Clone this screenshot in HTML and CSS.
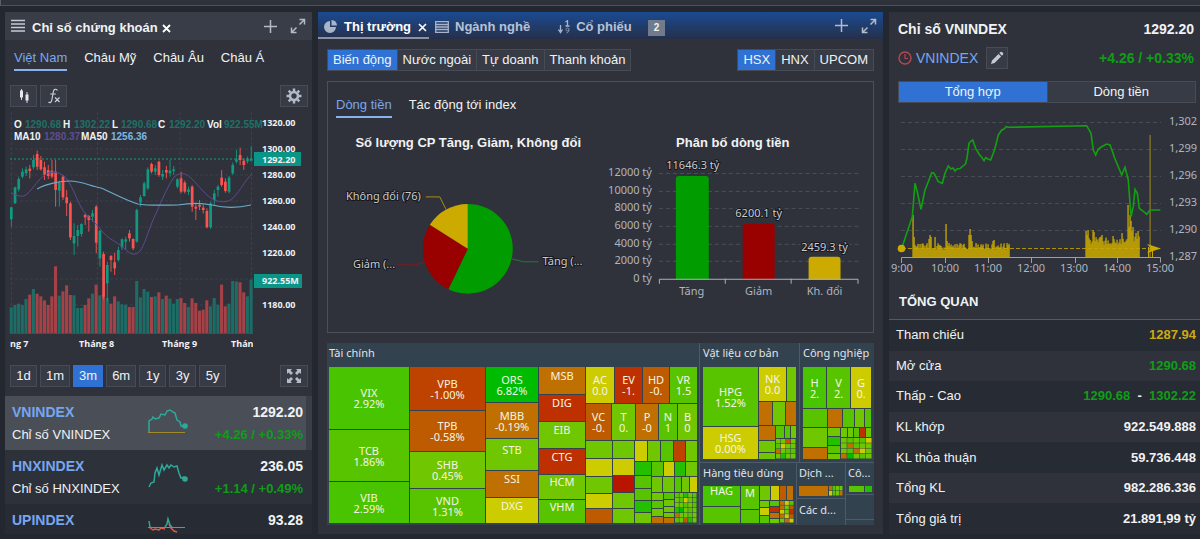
FILE: index.html
```html
<!DOCTYPE html>
<html lang="vi">
<head>
<meta charset="utf-8">
<meta name="viewport" content="width=device-width, initial-scale=1">
<title>Bảng chỉ số chứng khoán</title>
<link rel="stylesheet" href="styles.css">
</head>
<body>
<div class="topbar"></div>
<main class="board">

  <section class="panel">
    <header class="panel-head">
      <svg class="icon" width="14" height="14" viewBox="0 0 14 14"><path d="M0 1.500h14M0 5h14M0 8.500h14M0 12h14" stroke="#c6cbd4" stroke-width="1.400"/></svg>
      <h1 class="head-title">Chỉ số chứng khoán</h1>
      <button class="bare close" aria-label="Đóng"><svg width="9" height="9" viewBox="0 0 9 9"><path d="M1 1l7 7M8 1l-7 7" stroke="#fff" stroke-width="1.800"/></svg></button>
      <span class="spacer"></span>
      <button class="bare" aria-label="Thêm"><svg width="13" height="13" viewBox="0 0 13 13"><path d="M6.500 0v13M0 6.500h13" stroke="#b4bac6" stroke-width="1.500"/></svg></button>
      <button class="bare expand" aria-label="Mở rộng"><svg width="16" height="16" viewBox="0 0 16 16"><path d="M9.500 6.500L14 2M6.500 9.500L2 14M9.500 1.500H14.500V6.500M1.500 9.500v5H6.500" fill="none" stroke="#b4bac6" stroke-width="1.500"/></svg></button>
    </header>

    <nav class="tabs market-tabs">
      <button class="tab active">Việt Nam</button>
      <button class="tab">Châu Mỹ</button>
      <button class="tab">Châu Âu</button>
      <button class="tab">Châu Á</button>
    </nav>

    <div class="tools">
      <button class="tool" aria-label="Kiểu biểu đồ"><svg width="14" height="14" viewBox="0 0 14 14"><path d="M4.500 0v11M10 3v11" stroke="#d5d8de"/><path d="M3 1.500h3v7H3zM8.500 5.500h3v6h-3z" fill="#e6e8ec"/></svg></button>
      <button class="tool" aria-label="Chỉ báo"><svg width="14" height="16" viewBox="0 0 14 16"><path d="M10.500 2.500C9 .5 6.800 1 6.400 3.500L4.800 12C4.500 14.500 2.800 15.200 1.500 14M3.200 6h5.600M8 9.500l4.500 4.500M12.500 9.500L8 14" fill="none" stroke="#c9cdd5" stroke-width="1.200"/></svg></button>
      <span class="spacer"></span>
      <button class="tool" aria-label="Cài đặt"><svg width="16" height="16" viewBox="-8 -8 16 16"><circle r="4" fill="none" stroke="#b4bac6" stroke-width="2.600"/><path d="M0-5v-2.500M0 5v2.500M-5 0h-2.500M5 0h2.500M-3.600-3.600l-1.700-1.700M3.600 3.600l1.700 1.700M-3.600 3.600l-1.700 1.700M3.600-3.600l1.700-1.700" stroke="#b4bac6" stroke-width="2.500"/></svg></button>
    </div>

    <svg class="chart price-chart" viewBox="0 0 298 240" role="img" aria-label="Biểu đồ nến VNINDEX">
      <g class="grid-dark"><path d="M0 37h243M0 63h243M0 89h243M0 115h243M0 141h243M0 167h243M0 193h243M1.500 0v222M87.500 0v222M170 0v222M241.500 0v222"/></g>
      <path d="M0 47h243" stroke="#149a85" stroke-dasharray="2 2"/>
      <g id="volume"></g>
      <path d="M0 221.500h243" stroke="#3a6a68" stroke-width=".6"/>
      <g id="candles"></g>
      <path class="ma10" d="M1 81C8 84 13 86 17 82C24 76 28 67 36 62C44 58 52 61 57 67C64 78 66 86 71 95C78 107 84 108 91 118C99 128 106 129 114 136C120 143 126 144 130 139C135 132 136 125 143 108C150 93 155 79 164 65C171 59 177 62 181 66C190 75 196 84 204 88C212 91 219 90 223 86C231 78 235 68 242 62"/>
      <path class="ma50" d="M27 77C36 72 50 69 60 69C71 69 80 74 91 76C103 81 117 89 128 92C139 94 156 93 168 93C180 91 192 91 202 93C214 96 228 96 241 93"/>
      <text class="legend" y="16"><tspan x="4">O</tspan><tspan class="teal" x="15">1290.68</tspan><tspan x="53">H</tspan><tspan class="teal" x="64">1302.22</tspan><tspan x="102">L</tspan><tspan class="teal" x="111">1290.68</tspan><tspan x="148">C</tspan><tspan class="teal" x="159">1292.20</tspan><tspan x="197">Vol</tspan><tspan class="teal" x="214">922.55M</tspan></text>
      <text class="legend" y="28"><tspan x="4">MA10</tspan><tspan class="violet" x="34">1280.37</tspan><tspan x="71">MA50</tspan><tspan class="sky" x="101">1256.36</tspan></text>
      <path d="M244 40h47v14h-47zM244 162h48v14h-48z" fill="#0b9586"/>
      <g class="axis-bold">
        <text x="252" y="14">1320.00</text><text x="252" y="40">1300.00</text><text x="252" y="51">1292.20</text><text x="252" y="66">1280.00</text><text x="252" y="92">1260.00</text><text x="252" y="118">1240.00</text><text x="252" y="144">1220.00</text><text x="252" y="172">922.55M</text><text x="252" y="196">1180.00</text>
      </g>
      <svg x="0" y="222" width="243" height="18" class="axis-bold">
        <text x="0" y="13">ng 7</text><text x="69" y="13">Tháng 8</text><text x="152" y="13">Tháng 9</text><text x="221" y="13">Tháng</text>
      </svg>
    </svg>

    <div class="tools ranges">
      <button class="tool">1d</button><button class="tool">1m</button><button class="tool active">3m</button><button class="tool">6m</button><button class="tool">1y</button><button class="tool">3y</button><button class="tool">5y</button>
      <span class="spacer"></span>
      <button class="tool" aria-label="Toàn màn hình"><svg width="16" height="16" viewBox="0 0 16 16"><path d="M1 1h5L4.500 2.500 7 5 5 7 2.500 4.500 1 6zM15 1v5l-1.500-1.500L11 7 9 5l2.500-2.500L10 1zM1 15v-5l1.500 1.500L5 9l2 2-2.500 2.500L6 15zM15 15h-5l1.500-1.500L9 11l2-2 2.500 2.500L15 10z" fill="#b4bac6"/></svg></button>
    </div>

    <ul class="index-list">
      <li class="index-row selected">
        <div class="index-name"><a class="ticker" href="#vnindex">VNINDEX</a><span>Chỉ số VNINDEX</span></div>
        <svg class="spark" width="42" height="30" viewBox="0 0 42 30"><path d="M2 24V13l3-2 1-2 2 2 4-1 2-4 4 1 2-4 3-1 3 2 2 1 2 7 3 2 1 4 4 1" fill="none" stroke="#2fa89a" stroke-width="1.500"/><path d="M1 24.500h37" stroke="#a08a2a"/><circle cx="38" cy="18" r="2.800" fill="#2fa89a"/></svg>
        <div class="index-value"><b>1292.20</b><b class="up">+4.26 / +0.33%</b></div>
      </li>
      <li class="index-row">
        <div class="index-name"><a class="ticker" href="#hnxindex">HNXINDEX</a><span>Chỉ số HNXINDEX</span></div>
        <svg class="spark" width="42" height="30" viewBox="0 0 42 30"><path d="M2 25l2-4 3-1 1-9 2-5 2 7 3-10 2 5 3-5 2 3 2-3 3 2 3-1 2 7 2 5 3-1 3 2" fill="none" stroke="#2fa89a" stroke-width="1.500"/><circle cx="38" cy="17" r="2.800" fill="#2fa89a"/></svg>
        <div class="index-value"><b>236.05</b><b class="up">+1.14 / +0.49%</b></div>
      </li>
      <li class="index-row">
        <div class="index-name"><a class="ticker" href="#upindex">UPINDEX</a></div>
        <svg class="spark" width="42" height="30" viewBox="0 0 42 30"><path d="M3 12l3 2 2-1 4 1 2-2 4 1M22 8l2 4 3 3 3 1" fill="none" stroke="#e2594a" stroke-width="1.500"/><path d="M2 5l1 6M18 11l2-3 1-5 2 6 2 2" fill="none" stroke="#2fa89a" stroke-width="1.500"/><path d="M1 11.500h37" stroke="#a08a2a"/></svg>
        <div class="index-value"><b>93.28</b></div>
      </li>
    </ul>
  </section>

  <section class="panel">
    <header class="panel-head blue">
      <button class="head-tab current">
        <svg width="13" height="13" viewBox="0 0 13 13"><path d="M6 1v6h6A6 6 0 1 1 6 1z" fill="#aab4c8"/><path d="M7.500 0A6 6 0 0 1 13 5.500H7.500z" fill="#aab4c8"/></svg>
        Thị trường
        <svg class="tab-close" width="9" height="9" viewBox="0 0 9 9"><path d="M1 1l7 7M8 1l-7 7" stroke="#fff" stroke-width="1.600"/></svg>
      </button>
      <button class="head-tab">
        <svg width="14" height="12" viewBox="0 0 14 12"><path d="M.7.7h12.600v10.600H.7zM1 3.500h12M1 6h12M1 8.500h12" fill="none" stroke="#aab4c8" stroke-width="1.300"/></svg>
        Ngành nghề
      </button>
      <button class="head-tab sort-tab">
        <svg width="12" height="14" viewBox="0 0 12 14"><path d="M2.500 5v7M.5 9.500l2 3 2-3M7.500 2L9.500.8V6M7.500 6h4" fill="none" stroke="#aab4c8" stroke-width="1.300"/><circle cx="9.500" cy="9.500" r="1.500" fill="none" stroke="#8791a6"/><path d="M11 9.500q0 3-2.500 3.500" fill="none" stroke="#8791a6"/></svg>
        Cổ phiếu
      </button>
      <span class="count">2</span>
      <span class="spacer"></span>
      <button class="bare" aria-label="Thêm"><svg width="13" height="13" viewBox="0 0 13 13"><path d="M6.500 0v13M0 6.500h13" stroke="#b4bac6" stroke-width="1.500"/></svg></button>
      <button class="bare expand" aria-label="Mở rộng"><svg width="16" height="16" viewBox="0 0 16 16"><path d="M9.500 6.500L14 2M6.500 9.500L2 14M9.500 1.500H14.500V6.500M1.500 9.500v5H6.500" fill="none" stroke="#b4bac6" stroke-width="1.500"/></svg></button>
    </header>

    <div class="filters">
      <div class="segment"><button class="seg active">Biến động</button><button class="seg">Nước ngoài</button><button class="seg">Tự doanh</button><button class="seg">Thanh khoản</button></div>
      <div class="segment"><button class="seg active">HSX</button><button class="seg">HNX</button><button class="seg">UPCOM</button></div>
    </div>

    <div class="card">
      <nav class="tabs">
        <button class="tab active">Dòng tiền</button>
        <button class="tab">Tác động tới index</button>
      </nav>
      <div class="figures">
        <figure class="figure">
          <figcaption>Số lượng CP Tăng, Giảm, Không đổi</figcaption>
          <svg class="chart" viewBox="0 0 265 176" role="img" aria-label="Tỷ lệ cổ phiếu tăng, giảm, không đổi">
            <path d="M132 93V48A45 45 0 1 1 112.500 133.500z" fill="#009c00"/>
            <path d="M132 93L112.500 133.500A45 45 0 0 1 94 69z" fill="#990000"/>
            <path d="M132 93L94 69A45 45 0 0 1 132 48z" fill="#ccaa00"/>
            <path d="M90 41h14l6 12" fill="none" stroke="#a88e18"/>
            <path d="M62 109h18l10-3" fill="none" stroke="#7d1a20"/>
            <path d="M176 103l12 3h15" fill="none" stroke="#1c7c2c"/>
            <g class="outlined"><text x="10" y="44">Không đổi (76)</text><text x="17" y="112">Giảm (...</text><text x="207" y="109">Tăng (...</text></g>
          </svg>
        </figure>
        <figure class="figure">
          <figcaption>Phân bố dòng tiền</figcaption>
          <svg class="chart" viewBox="0 0 265 176" role="img" aria-label="Phân bố dòng tiền theo nhóm">
            <path d="M58 17.500h200M58 35.500h200M58 52.500h200M58 70.500h200M58 88.500h200M58 105.500h200" stroke="#4b4f58" stroke-dasharray="4 3"/>
            <path d="M75 124V23q0-3 3-3h27q3 0 3 3v101z" fill="#009c00"/>
            <path d="M142 124V71q0-3 3-3h26q3 0 3 3v53z" fill="#990000"/>
            <path d="M208 124v-20q0-3 3-3h26q3 0 3 3v20z" fill="#ccaa00"/>
            <path d="M58.500 128v-4.500h199v4.500M124.500 123v5M190.500 123v5" fill="none" stroke="#aeb2bb"/>
            <g class="axis end"><text x="51" y="20">12000 tỷ</text><text x="51" y="38">10000 tỷ</text><text x="51" y="55">8000 tỷ</text><text x="51" y="73">6000 tỷ</text><text x="51" y="91">4000 tỷ</text><text x="51" y="108">2000 tỷ</text><text x="51" y="126">0 tỷ</text></g>
            <g class="axis mid"><text x="91" y="139">Tăng</text><text x="158" y="139">Giảm</text><text x="224" y="139">Kh. đổi</text></g>
            <g class="outlined mid"><text x="92" y="13">11646.3 tỷ</text><text x="158" y="61">6200.1 tỷ</text><text x="224" y="95">2459.3 tỷ</text></g>
          </svg>
        </figure>
      </div>
    </div>

    <svg class="chart treemap" id="treemap" viewBox="0 0 547 182" role="img" aria-label="Bản đồ nhiệt theo ngành"></svg>
  </section>

  <section class="panel detail">
    <div class="quote">
      <h2 class="quote-title">Chỉ số VNINDEX</h2>
      <b class="quote-price">1292.20</b>
      <div class="quote-link">
        <svg width="14" height="14" viewBox="0 0 14 14"><circle cx="7" cy="7" r="6" fill="none" stroke="#b8474f" stroke-width="1.400"/><path d="M7 3v4.500h3" fill="none" stroke="#b8474f" stroke-width="1.200"/></svg>
        <a href="#vnindex">VNINDEX</a>
        <button class="tool edit" aria-label="Sửa"><svg width="14" height="14" viewBox="0 0 14 14"><path d="M1 13l1-3.600 6.500-6.500 2.600 2.600L4.600 12zM9.300 2.100l1.300-1.200q.7-.5 1.400.1l1 1q.6.7.1 1.400l-1.200 1.300z" fill="#c4c9d2"/></svg></button>
      </div>
      <b class="quote-change up">+4.26 / +0.33%</b>
    </div>
    <div class="segment wide"><button class="seg active">Tổng hợp</button><button class="seg">Dòng tiền</button></div>

    <svg class="chart" viewBox="0 0 311 172" role="img" aria-label="Diễn biến VNINDEX trong phiên">
      <path d="M12 16.500h260M12 43.500h260M12 70.500h260M12 97.500h260M12 124.500h260" stroke="#484c55" stroke-dasharray="4 3"/>
      <g id="intraday-volume"></g>
      <path d="M13 142.500h255" stroke="#ccaa00" stroke-dasharray="4 2" stroke-width=".8"/>
      <path d="M12.500 157v-5.500h259v5M56.500 152v5M99.500 152v5M142.500 152v5M186.500 152v5M228.500 152v5" fill="none" stroke="#9b9fa8"/>
      <path d="M12.700 142.300L23.300 110.700 26 77.300 28.300 86 32 103.300 36 84 39.300 75.700 42.700 66.700 45 67.300 49.300 75.700 53.300 77.300 56 67.300 59.300 60 62 63 64 62 66 65 68 63 71 62.500 74 60 76.500 58 78 52 80 37.300 82 35 83.700 34 86.700 42.300 90 48 92.700 51.300 95 54.700 96.700 51.700 99 53 101.700 54 104 48 106 42.300 109.300 29 112.700 24 115 23 117.300 20.500 119 21.300 197.700 19.700 202 27.300 204.300 44 206.700 49 209.300 43 213 40.500 217.700 38 221 39 224 47 225.300 51.300 229.300 60.700 232.700 69 236 61.300 239.300 74 241 97.300 242 110.700 244.300 100.700 246 83.300 248.300 87.300 250.300 102.300 254 105 257.700 108.300 261 104H271.300" fill="none" stroke="#12a012" stroke-width="1.600"/>
      <circle cx="12.500" cy="142.500" r="3.800" fill="#ccaa00"/>
      <path d="M258 138l14 4.500-14 4.500 4-4.500z" fill="#ccaa00"/>
      <g class="axis"><text x="280" y="19">1,302</text><text x="280" y="46">1,299</text><text x="280" y="73">1,296</text><text x="280" y="100">1,293</text><text x="280" y="127">1,290</text><text x="280" y="154">1,287</text></g>
      <g class="axis mid"><text x="13" y="166">9:00</text><text x="56" y="166">10:00</text><text x="99" y="166">11:00</text><text x="142" y="166">12:00</text><text x="185" y="166">13:00</text><text x="228" y="166">14:00</text><text x="271" y="166">15:00</text></g>
    </svg>

    <h3 class="overview-title">TỔNG QUAN</h3>
    <div class="overview-body">
      <table class="overview">
        <tbody>
          <tr><th scope="row">Tham chiếu</th><td class="ref">1287.94</td></tr>
          <tr><th scope="row">Mở cửa</th><td class="up">1290.68</td></tr>
          <tr><th scope="row">Thấp - Cao</th><td><span class="up">1290.68</span> &nbsp;-&nbsp; <span class="up">1302.22</span></td></tr>
          <tr><th scope="row">KL khớp</th><td>922.549.888</td></tr>
          <tr><th scope="row">KL thỏa thuận</th><td>59.736.448</td></tr>
          <tr><th scope="row">Tổng KL</th><td>982.286.336</td></tr>
          <tr><th scope="row">Tổng giá trị</th><td>21.891,99 tỷ</td></tr>
        </tbody>
      </table>
    </div>
  </section>
</main>
<script src="charts.js"></script>
</body>
</html>
```

FILE: styles.css
```css
* { box-sizing: border-box; }

body {
  margin: 0;
  height: 100vh;
  display: flex;
  flex-direction: column;
  overflow: hidden;
  background: #232730;
  color: #f1f2f4;
  font: 13px/16px "Liberation Sans", Arial, sans-serif;
}

h1, h2, h3, ul, figure { margin: 0; padding: 0; }
button { font: inherit; color: inherit; margin: 0; padding: 0; border: 0; background: none; cursor: pointer; }
a { color: #77a6f0; text-decoration: none; }
svg { display: block; flex: none; }

.topbar { height: 6px; flex: none; background: #2e323b; border-bottom: 1px solid #4d515a; border-left: 1px solid #5a5e66; }

.board {
  flex: 1;
  min-height: 0;
  display: grid;
  grid-template-columns: 307fr 565fr 311fr;
  gap: 6px;
  padding: 6px 0 5px 5px;
}

.panel { display: flex; flex-direction: column; min-width: 0; min-height: 0; overflow: hidden; background: #2f323b; }
.spacer { flex: 1; }
.up { color: #0f9d17; }
.ref { color: #ccaa11; }

.panel-head { display: flex; align-items: center; flex: none; height: 28px; padding: 0 6px; background: #383d47; }
.icon { margin-right: 7px; }
.head-title { font-size: 13px; font-weight: bold; padding-top: 3px; }
.close { margin: 4px 0 0 4px; }
.expand { margin-left: 13px; }

.panel-head.blue { height: 27px; padding: 0 6px 0 0; background: linear-gradient(#1b4a92, #25304a); }
.head-tab { display: flex; align-items: center; align-self: stretch; gap: 6px; padding: 4px 2px 0 6px; font-weight: bold; color: #b9c2d3; border-bottom: 2px solid transparent; }
.head-tab.current { gap: 7px; color: #fff; border-bottom-color: #8a93a5; }
.tab-close { margin-top: 2px; }
.sort-tab { margin-left: 20px; }
.count { margin: 5px 0 0 14px; padding: 0 6px; font-size: 10px; font-weight: bold; background: #727b8c; }

.tabs { display: flex; gap: 17px; }
.market-tabs { padding: 10px 9px 0; }
.tab { padding-bottom: 3px; border-bottom: 2px solid transparent; }
.tab.active { color: #7aa7ee; border-bottom-color: #8ab2f2; }

.tools { display: flex; gap: 3px; padding: 14px 4px 5px 5px; }
.tool { display: flex; align-items: center; justify-content: center; height: 22px; min-width: 27px; padding: 0 5px; background: #363b45; border: 1px solid #464b55; }
.tool.active { background: #2f72d4; border-color: #2f72d4; }
.ranges { padding: 13px 4px 9px 5px; }

.chart { width: 100%; height: auto; overflow: visible; }
.price-chart { width: auto; margin: 0 4px 0 5px; }
.grid-dark { fill: none; stroke: #3b3f48; stroke-dasharray: 3 2; }
.ma10 { fill: none; stroke: #5d4a8c; }
.ma50 { fill: none; stroke: #6fa8c8; stroke-width: 1.2px; }
.legend { font: bold 10px "Liberation Sans", Arial, sans-serif; fill: #f1f2f4; }
.legend .teal { fill: #1d7168; }
.legend .violet { fill: #5f4d90; }
.legend .sky { fill: #79b8e2; }
.axis-bold { font: bold 9px "Open Sans", sans-serif; fill: #f1f2f4; }
.axis { font: 11px "Noto Sans", sans-serif; fill: #b1b5bf; }
.outlined { font: 11px "Noto Sans", sans-serif; fill: #c9ccd2; stroke: #16181d; stroke-width: 2px; paint-order: stroke; }
.mid { text-anchor: middle; }
.end { text-anchor: end; }

.index-list { flex: 1; min-height: 0; overflow: hidden; list-style: none; }
.index-row { display: flex; align-items: flex-start; height: 54px; padding: 8px 9px 0 7px; background: #2d313a; }
.index-row:nth-child(3) { background: #272b33; }
.index-row.selected { background: #4a4f57; border-right: 6px solid #3a3e47; padding-right: 3px; }
.index-name { flex: 1; display: flex; flex-direction: column; gap: 7px; }
.ticker { font-size: 14px; font-weight: bold; }
.spark { margin: 4px 6px 0 0; }
.index-value { width: 108px; display: flex; flex-direction: column; gap: 7px; text-align: right; }
.index-value b:first-child { font-size: 14px; }

.filters { display: flex; justify-content: space-between; padding: 10px 9px 10px; }
.segment { display: flex; border: 1px solid #464b55; background: #363b45; }
.seg { height: 20px; padding: 0 5px; border-left: 1px solid #464b55; }
.seg:first-child { border-left: 0; }
.seg.active { background: #2f72d4; }

.card { margin: 0 9px; padding: 15px 8px 0; border: 1px solid #4b4f58; }
.figures { display: flex; padding-top: 17px; }
.figure { flex: 1; min-width: 0; }
.figure figcaption { font-weight: bold; text-align: center; }
.figure .chart { margin-top: 5px; }

.treemap { width: auto; margin: 10px 9px 0; background: #33424f; }
.treemap .sector { font: 11px "Noto Sans", sans-serif; fill: #e1e4e8; }
.treemap .cell { font: 11px "Noto Sans", sans-serif; fill: #f5f5e6; text-anchor: middle; }

.quote { display: grid; grid-template-columns: 1fr auto; align-items: center; row-gap: 10px; padding: 9px 6px 12px 9px; }
.quote-title, .quote-price, .quote-change { font-size: 14px; font-weight: bold; }
.quote-price, .quote-change { text-align: right; }
.quote-link { display: flex; align-items: center; gap: 4px; font-size: 14px; }
.edit { width: 22px; min-width: 22px; margin-left: 4px; padding: 0; }
.segment.wide { margin: 0 4px 3px 9px; }
.wide .seg { flex: 1; }

.overview-title { padding: 16px 10px 9px; font-size: 13px; border-bottom: 1px solid #555960; }
.overview-body { flex: 1; min-height: 0; }
.overview { width: 100%; height: 100%; border-collapse: collapse; }
.overview tr:nth-child(odd) { background: #272b33; }
.overview th { padding: 0 7px; font-weight: normal; text-align: left; }
.overview td { padding: 0 4px; font-weight: bold; text-align: right; }
```

FILE: charts.js
```js
const NS = "http://www.w3.org/2000/svg";

function add(parent, tag, attrs, text) {
  const node = document.createElementNS(NS, tag);
  for (const key in attrs) node.setAttribute(key, attrs[key]);
  if (text) node.textContent = text;
  parent.appendChild(node);
  return node;
}

function rect(parent, x, y, width, height, fill) {
  return add(parent, "rect", { x, y, width, height, fill });
}

/* Daily candles: direction, body top, body bottom, wick top, wick bottom (in thirds of a unit). */
const candles = `G 292 328 290 350|G 232 280 230 282|G 207 238 200 245|G 185 200 175 205|G 178 190 170 198|R 176 183 165 205|G 150 172 135 178|R 132 170 122 180|R 150 178 138 182|R 172 195 155 210|R 180 198 165 207|R 182 200 150 205|R 185 240 150 290|G 218 242 212 290|R 200 262 195 270|R 262 280 240 318|R 280 382 275 390|G 378 400 340 435|G 360 378 345 410|G 342 372 340 380|R 315 322 310 345|R 318 330 315 365|G 310 320 300 335|R 290 398 285 430|G 362 445 360 470|R 432 560 425 568|G 465 520 455 575|R 438 450 435 485|R 457 475 428 495|G 420 450 410 455|G 388 412 385 420|G 388 395 380 420|R 370 385 360 395|R 387 415 385 420|G 300 395 296 398|G 262 278 255 290|G 220 258 215 260|G 178 235 172 240|R 162 185 158 190|G 175 185 165 195|R 155 195 152 200|G 192 200 180 210|R 180 188 168 205|G 182 190 150 200|G 178 183 168 195|G 208 230 205 235|R 205 245 185 250|R 218 245 212 250|G 238 246 230 255|R 230 290 225 305|R 290 296 280 330|R 285 290 270 300|R 293 300 285 310|R 303 352 295 355|G 280 352 275 357|G 250 270 240 285|G 230 240 225 260|R 203 225 180 230|R 215 243 205 248|G 203 245 198 250|G 165 190 158 195|G 148 155 120 160|R 135 150 113 165|R 152 165 145 180|G 146 154 140 160|G 146 152 108 155`.split("|");
const volumes = [77, 84, 88, 84, 102, 115, 132, 118, 110, 98, 84, 110, 200, 112, 125, 143, 114, 113, 75, 75, 84, 104, 118, 145, 113, 115, 105, 88, 110, 95, 86, 85, 78, 78, 156, 107, 132, 124, 108, 110, 122, 102, 112, 103, 88, 102, 105, 90, 78, 104, 90, 67, 70, 98, 80, 105, 85, 145, 80, 88, 156, 155, 152, 122, 110, 160];

const candleLayer = document.getElementById("candles");
const volumeLayer = document.getElementById("volume");
candles.forEach((row, i) => {
  const [dir, ...values] = row.split(" ");
  const [top, bottom, high, low] = values.map(v => v / 3 - 2);
  const x = 1.3 + i * 3.69;
  const color = dir === "G" ? "#109a82" : "#fb5350";
  rect(candleLayer, x - 0.4, high, 0.9, low - high, color);
  rect(candleLayer, x - 1.3, top, 2.7, bottom - top, color);
  rect(volumeLayer, x - 1.6, 221 - volumes[i] / 3, 3.1, volumes[i] / 3, dir === "G" ? "#1d6c65" : "#a44247");
});

/* Traded volume per minute. */
const intraday = document.getElementById("intraday-volume");
const noise = i => (Math.sin(i * 12.9) * 43758.5 % 1 + 1) % 1;
const peaks = { 24: 42, 25: 20, 40: 18, 41: 22, 42: 20, 46: 20, 57: 33, 58: 16, 80: 22, 81: 28, 82: 22, 83: 16, 104: 16, 105: 17, 197: 26, 198: 22, 199: 27, 204: 27, 205: 25, 213: 22, 224: 21, 233: 24, 239: 52, 240: 30, 241: 42, 242: 36, 243: 26, 244: 30, 247: 24, 249: 26 };
for (let x = 24; x <= 250; x++) {
  if (x > 120 && x < 197) continue;
  const base = x < 121 ? 7 + noise(x) * 7 : 12 + noise(x) * 9;
  const h = peaks[x] || base;
  rect(intraday, x - 0.6, 151 - h, 1.3, h, "#c9a800");
}
rect(intraday, 260.5, 29, 1.2, 122, "#8f7c22");
rect(intraday, 259, 141, 1, 10, "#c9a800");
rect(intraday, 263, 144, 1, 7, "#c9a800");

/* Sector heat map. */
const map = document.getElementById("treemap");
const tone = { a: "#48c400", b: "#58c400", c: "#70c600", d: "#24c000", e: "#00bc00", y: "#cccc00", o: "#c07000", p: "#be5a00", q: "#be4200", r: "#be3000", s: "#b81400" };
const cells = `2 24 80 62 a VIX 2.92%|2 87 80 51 b TCB 1.86%|2 139 80 41 a VIB 2.59%|83 24 75 43 q VPB -1.00%|83 68 75 40 p TPB -0.58%|83 109 75 36 c SHB 0.45%|83 146 75 34 b VND 1.31%|159 24 52 35 e ORS 6.82%|159 60 52 35 o MBB -0.19%|159 96 52 31 c STB|159 128 52 26 o SSI|159 155 52 25 y DXG|212 24 46 27 o MSB|212 52 46 26 r DIG|212 79 46 26 c EIB|212 106 46 25 r CTG|212 132 46 24 c HCM|212 157 46 23 b VHM|259 24 28 36 y AC 0.0|288 24 27 36 r EV -1.|316 24 26 36 p HD -0.|343 24 27 36 b VR 1.5|259 61 25 36 p VC -0.|285 61 23 36 c T 0.|309 61 22 36 o P -0|332 61 18 36 b N 1|351 61 19 36 c B 0|259 98 26 17 c|259 116 26 17 y|259 134 26 16 c|259 151 26 14 y|259 166 26 14 p|286 98 21 17 c|286 116 21 16 y|286 133 21 16 s|286 150 21 15 c|286 166 21 14 c|308 98 12 20 y|321 98 12 20 c|334 98 12 20 b|347 98 11 20 q|359 98 11 20 c|308 119 16 13 d|308 133 16 12 b|308 146 16 11 b|308 158 16 11 d|308 170 16 10 c|325 119 11 14 b|337 119 10 14 y|348 119 10 14 d|359 119 11 14 c|325 134 10 15 c|336 134 11 15 c|348 134 6 15 b|355 134 7 15 c|363 134 7 15 y|325 150 11 7 c|325 158 11 7 b|325 166 11 7 c|325 174 11 6 o|337 150 10 6 b|337 157 10 6 c|337 164 10 5 c|337 170 10 4 c|337 175 10 5 o|376 24 55 59 b HPG 1.52%|376 84 55 32 y HSG 0.00%|432 24 27 34 y NK 0.0|460 24 9 34 c|432 59 13 23 o|446 59 12 23 c|459 59 10 23 o|432 83 16 14 o|432 98 16 11 c|432 110 16 6 c|449 83 8 12 b|458 83 5 12 b|464 83 5 12 c|476 24 23 41 a H 2.|500 24 23 41 b V 2.|524 24 20 41 y G 0.|476 66 24 18 b|476 85 24 19 c|476 105 24 11 o|501 66 14 18 o|516 66 11 18 b|528 66 9 18 c|538 66 6 18 b|501 85 12 8 c|501 94 12 8 d|501 103 12 7 b|501 111 12 5 c|514 85 6 9 c|521 85 5 9 c|527 85 5 9 b|533 85 5 9 r|539 85 5 9 c|376 143 37 20 a HAG|376 164 37 16 b|414 143 18 23 b M|414 167 18 13 b|433 143 10 14 c|444 143 8 14 y|453 143 6 14 p|460 143 6 14 o|433 158 9 6 c|433 165 9 7 y|433 173 9 7 b|443 158 9 5 b|443 164 9 5 r|443 170 9 5 o|443 176 9 4 c|472 143 29 10 o|522 143 15 6 b|538 143 7 6 d`;

for (const row of cells.split("|")) {
  const [x, y, w, h, key, name, change] = row.split(" ");
  rect(map, x, y, w, h, tone[key]);
  const cx = +x + w / 2;
  const cy = +y + h / 2;
  if (name) add(map, "text", { x: cx, y: cy - 1, class: "cell" }, name);
  if (change) add(map, "text", { x: cx, y: cy + 10, class: "cell" }, change);
}

/* Small caps in each sector are drawn as an even mosaic. */
function mosaic(x, y, w, h, cols, keys) {
  const rows = Math.ceil(keys.length / cols);
  [...keys].forEach((key, i) => {
    const cw = w / cols;
    const ch = h / rows;
    rect(map, x + (i % cols) * cw, y + Math.floor(i / cols) * ch, cw - 0.5, ch - 0.5, tone[key]);
  });
}
mosaic(348, 150, 22, 30, 5, "bcdcbcbycbccbcbdecbcoccbcbcpdc");
mosaic(449, 96, 20, 20, 4, "ccpcbyccocbbcdcc");
mosaic(514, 95, 31, 21, 5, "cbcbycobcccboycoecbc");
mosaic(453, 158, 14, 22, 3, "oybocpycroypcoy");
mosaic(502, 143, 14, 10, 4, "obccybco");

add(map, "path", { d: "M372.500 0V182M472.500 0V119M373 119.500H547M469.500 119V182M518.500 119V182M470 155.500H518M519 151.500H547M519 176.500H547", stroke: "#4e5a67", fill: "none" });
[[2, 14, "Tài chính"], [376, 14, "Vật liệu cơ bản"], [476, 14, "Công nghiệp"], [376, 134, "Hàng tiêu dùng"], [472, 134, "Dịch ..."], [521, 134, "Cô..."], [472, 171, "Các d..."]]
  .forEach(([x, y, label]) => add(map, "text", { x, y, class: "sector" }, label));
```
